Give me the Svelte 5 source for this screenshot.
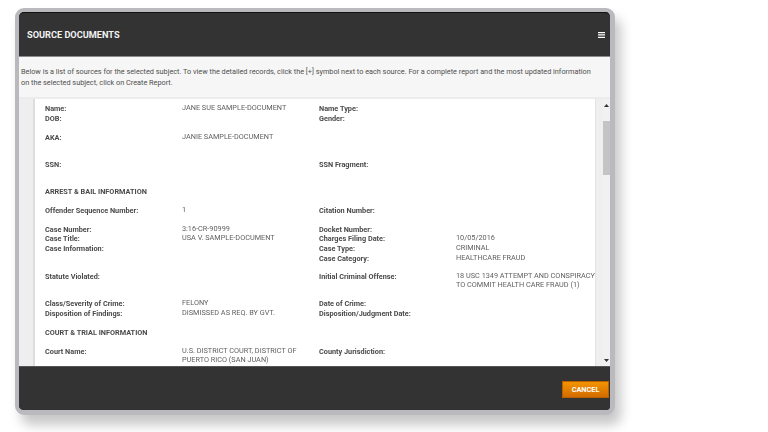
<script>
  const rows = [
    { a: 'Name:', b: 'JANE SUE SAMPLE-DOCUMENT', c: 'Name Type:' },
    { a: 'DOB:', c: 'Gender:' },
    { a: 'AKA:', b: 'JANIE SAMPLE-DOCUMENT', k: 'gap h27' },
    { a: 'SSN:', c: 'SSN Fragment:' },
    { a: 'ARREST & BAIL INFORMATION', k: 'head first' },
    { a: 'Offender Sequence Number:', b: '1', c: 'Citation Number:', k: 'gap' },
    { a: 'Case Number:', b: '3:16-CR-90999', c: 'Docket Number:', k: 'gap' },
    { a: 'Case Title:', b: 'USA V. SAMPLE-DOCUMENT', c: 'Charges Filing Date:', d: '10/05/2016' },
    { a: 'Case Information:', c: 'Case Type:', d: 'CRIMINAL' },
    { c: 'Case Category:', d: 'HEALTHCARE FRAUD' },
    { a: 'Statute Violated:', c: 'Initial Criminal Offense:', d: '18 USC 1349 ATTEMPT AND CONSPIRACY TO COMMIT HEALTH CARE FRAUD (1)', k: 'statute' },
    { a: 'Class/Severity of Crime:', b: 'FELONY', c: 'Date of Crime:' },
    { a: 'Disposition of Findings:', b: 'DISMISSED AS REQ. BY GVT.', c: 'Disposition/Judgment Date:' },
    { a: 'COURT & TRIAL INFORMATION', k: 'head' },
    { a: 'Court Name:', b: 'U.S. DISTRICT COURT, DISTRICT OF PUERTO RICO (SAN JUAN)', c: 'County Jurisdiction:', k: 'gap' }
  ];
</script>

<div class="page">
  <div class="window">
    <header class="top">
      <h1>SOURCE DOCUMENTS</h1>
      <svg class="menu" width="7" height="6" viewBox="0 0 7 6" aria-hidden="true">
        <path d="M0 0h7v1.3H0zM0 2.3h7v1.3H0zM0 4.7h7V6H0z" fill="#fff" />
      </svg>
    </header>
    <p class="intro">Below is a list of sources for the selected subject. To view the detailed records, click the [+] symbol next to each source. For a complete report and the most updated information on the selected subject, click on Create Report.</p>
    <div class="body">
      <div class="gutter"></div>
      <div class="sheet">
        {#each rows as r}
          <div class="row {r.k ?? ''}">
            <span class="label">{r.a ?? ''}</span>
            <span class="value">{r.b ?? ''}</span>
            <span class="label">{r.c ?? ''}</span>
            <span class="value">{r.d ?? ''}</span>
          </div>
        {/each}
      </div>
      <div class="rail"></div>
      <div class="scroll">
        <svg width="5" height="3" viewBox="0 0 5 3" aria-hidden="true"><path d="M2.5 0 5 3H0z" fill="#333" /></svg>
        <div class="track"><div class="thumb"></div></div>
        <svg width="5" height="3" viewBox="0 0 5 3" aria-hidden="true"><path d="M0 0h5L2.500 3z" fill="#333" /></svg>
      </div>
    </div>
    <footer class="bottom">
      <button type="button">CANCEL</button>
    </footer>
  </div>
</div>

<style>
  :global(body) {
    margin: 0;
    background: #fff;
  }
  .page {
    width: 768px;
    height: 432px;
    padding: 8px 0 0 15px;
    box-sizing: border-box;
    overflow: hidden;
    font-family: Roboto, "Liberation Sans", sans-serif;
    filter: blur(0.3px);
  }
  .window {
    width: 600px;
    height: 407px;
    box-sizing: border-box;
    border: solid #b9b9be;
    border-width: 4px 5px 5px 4px;
    border-radius: 9px;
    background: #333;
    box-shadow: 6px 10px 12px rgba(0, 0, 0, 0.22);
    display: flex;
    flex-direction: column;
    overflow: hidden;
  }
  .top {
    height: 45px;
    flex: none;
    box-sizing: border-box;
    background: #333;
    border-top: 1px solid #111;
    border-bottom: 1px solid #8a8a8a;
    border-radius: 5px 5px 0 0;
    display: flex;
    align-items: center;
    justify-content: space-between;
    padding: 0 5px 0 8px;
  }
  h1 {
    margin: 0;
    font-size: 9.2px;
    font-weight: 700;
    color: #f2f2f2;
  }
  .intro {
    margin: 0;
    height: 42px;
    flex: none;
    box-sizing: border-box;
    padding: 10px 10px 0 2px;
    background: #f6f6f6;
    border-bottom: 2px solid #ececec;
    font-size: 7.3px;
    line-height: 10.6px;
    color: #4f4f4f;
  }
  .body {
    flex: 1;
    min-height: 0;
    display: flex;
    background: #fff;
    overflow: hidden;
  }
  .gutter {
    width: 16px;
    flex: none;
    box-sizing: border-box;
    background: #eee;
    border-right: 2px solid #ddd;
  }
  .sheet {
    width: 560px;
    flex: none;
    box-sizing: border-box;
    padding: 6px 0 0 10px;
  }
  .row {
    display: grid;
    grid-template-columns: 137px 137px 137px 139px;
    min-height: 9.8px;
    font-size: 7.3px;
    line-height: 8.9px;
  }
  .gap {
    margin-top: 9.2px;
  }
  .h27 {
    min-height: 27px;
  }
  .head {
    margin-top: 10px;
    margin-bottom: 1px;
  }
  .first {
    margin-top: 17px;
  }
  .statute {
    margin-top: 8.2px;
    min-height: 26.8px;
  }
  .head .label:first-child {
    white-space: nowrap;
  }
  .label {
    font-weight: 700;
    color: #4a4a4a;
  }
  .value {
    margin-top: -1px;
    color: #5f5f5f;
  }
  .rail {
    width: 8px;
    flex: none;
    background: #efefef;
    border-left: 1px solid #e2e2e2;
    box-sizing: border-box;
  }
  .scroll {
    width: 7px;
    flex: none;
    background: #f1f1f1;
    display: flex;
    flex-direction: column;
    align-items: center;
    padding: 5px 0 4px;
    box-sizing: border-box;
    gap: 3px;
  }
  .track {
    flex: 1;
    width: 100%;
    padding-top: 11px;
    box-sizing: border-box;
  }
  .thumb {
    height: 54px;
    background: #c4c4c4;
  }
  .bottom {
    height: 44px;
    flex: none;
    box-sizing: border-box;
    background: #333;
    border-top: 1px solid #555;
    display: flex;
    justify-content: flex-end;
    align-items: flex-start;
    padding: 14px 1px 0 0;
  }
  button {
    width: 47px;
    height: 17px;
    padding: 0;
    border: 1px solid #b86000;
    background: linear-gradient(#f49400, #d26c00);
    color: #fff;
    font: 700 7.3px Roboto, "Liberation Sans", sans-serif;
  }
</style>
